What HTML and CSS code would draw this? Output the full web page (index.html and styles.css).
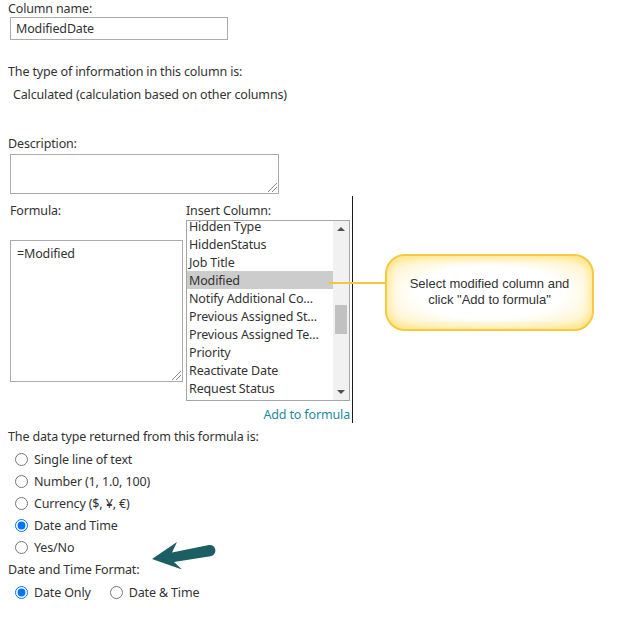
FILE: index.html
```html
<!DOCTYPE html>
<html>
<head>
<meta charset="utf-8">
<link rel="stylesheet" href="styles.css">
</head>
<body>
<div class="page">
  <div class="lbl">Column name:</div>
  <div class="textbox name-box">ModifiedDate</div>

  <div class="lbl type-lbl">The type of information in this column is:</div>
  <div class="lbl type-val">Calculated (calculation based on other columns)</div>

  <div class="lbl desc-lbl">Description:</div>
  <div class="textarea desc-box"><span class="grip"></span></div>

  <div class="formula-row">
    <div class="formula-col">
      <div class="lbl">Formula:</div>
      <div class="textarea formula-box">=Modified<span class="grip"></span></div>
    </div>
    <div class="insert-col">
      <div class="lbl">Insert Column:</div>
      <div class="listbox">
        <div class="items">
          <div class="item">Hidden Type</div>
          <div class="item">HiddenStatus</div>
          <div class="item">Job Title</div>
          <div class="item selected">Modified</div>
          <div class="item">Notify Additional Co...</div>
          <div class="item">Previous Assigned St...</div>
          <div class="item">Previous Assigned Te...</div>
          <div class="item">Priority</div>
          <div class="item">Reactivate Date</div>
          <div class="item">Request Status</div>
        </div>
        <div class="scrollbar">
          <span class="arrow up"></span>
          <span class="thumb"></span>
          <span class="arrow down"></span>
        </div>
      </div>
      <div class="add-link">Add to formula</div>
    </div>
  </div>

  <div class="lbl ret-lbl">The data type returned from this formula is:</div>
  <div class="radios">
    <label class="radio-row"><input type="radio" name="rt"><span>Single line of text</span></label>
    <label class="radio-row"><input type="radio" name="rt"><span>Number (1, 1.0, 100)</span></label>
    <label class="radio-row"><input type="radio" name="rt"><span>Currency ($, ¥, €)</span></label>
    <label class="radio-row"><input type="radio" name="rt" checked><span>Date and Time</span></label>
    <label class="radio-row"><input type="radio" name="rt"><span>Yes/No</span></label>
  </div>

  <div class="lbl fmt-lbl">Date and Time Format:</div>
  <div class="fmt-row">
    <label class="radio-row"><input type="radio" name="fmt" checked><span>Date Only</span></label>
    <label class="radio-row second"><input type="radio" name="fmt"><span>Date &amp; Time</span></label>
  </div>

  <div class="callout-line"></div>
  <div class="callout">Select modified column and<br>click "Add to formula"</div>

  <svg class="pointer" width="80" height="45" viewBox="0 0 80 45">
    <path d="M12 29 L37 12 L32 22.5 L69 15 A5.6 5.6 0 0 1 70.5 26.2 L34 32 L42 39.5 Z" fill="#1b5e63"/>
  </svg>
</div>
</body>
</html>
```

FILE: styles.css
```css
html, body {
  margin: 0;
  padding: 0;
  background: #ffffff;
}

.page {
  position: relative;
  width: 636px;
  height: 620px;
  padding: 1px 0 0 8px;
  box-sizing: border-box;
  font-family: "Noto Sans", "Open Sans", sans-serif;
  font-size: 12.5px;
  letter-spacing: -0.15px;
  color: #333333;
}

.lbl {
  line-height: 16px;
  white-space: nowrap;
}

.textbox {
  margin: 0 0 0 2px;
  width: 218px;
  height: 23px;
  box-sizing: border-box;
  border: 1px solid #ababab;
  padding: 1px 0 0 5px;
  line-height: 20px;
}

.type-lbl { margin-top: 24px; }
.type-val { margin-top: 7px; padding-left: 5px; }
.desc-lbl { margin-top: 33px; }

.textarea {
  position: relative;
  box-sizing: border-box;
  border: 1px solid #ababab;
  background: #fff;
}

.desc-box {
  margin: 2px 0 0 2px;
  width: 269px;
  height: 40px;
}

.grip {
  position: absolute;
  right: 1px;
  bottom: 1px;
  width: 9px;
  height: 9px;
  background:
    linear-gradient(135deg, transparent 0 46%, #8a8a8a 46% 54%, transparent 54% 100%) 0 0 / 9px 9px no-repeat,
    linear-gradient(135deg, transparent 0 46%, #8a8a8a 46% 54%, transparent 54% 100%) 4px 4px / 5px 5px no-repeat;
}

.formula-row {
  display: flex;
  gap: 3px;
  margin-top: 2px;
}

.formula-col {
  margin-left: 2px;
  width: 173px;
  padding-top: 7px;
}

.formula-box {
  margin-top: 21px;
  height: 142px;
  padding: 5px 0 0 6px;
  line-height: 16px;
}

.insert-col {
  width: 164px;
  padding: 7px 2px 0 0;
  border-right: 1px solid #1a1a1a;
}

.listbox {
  margin-top: 1px;
  height: 181px;
  box-sizing: border-box;
  border: 1px solid #a6a6a6;
  display: flex;
  overflow: hidden;
  background: #fff;
}

.items {
  flex: 1;
  margin-top: -4px;
}

.item {
  height: 18px;
  box-sizing: border-box;
  padding: 1px 0 0 2px;
  line-height: 17px;
  white-space: nowrap;
  overflow: hidden;
}

.item.selected {
  background: #cccccc;
}

.scrollbar {
  width: 16px;
  background: #f1f1f1;
  display: flex;
  flex-direction: column;
  align-items: center;
  position: relative;
}

.arrow {
  width: 0;
  height: 0;
  border-left: 4px solid transparent;
  border-right: 4px solid transparent;
}

.arrow.up {
  border-bottom: 4px solid #505050;
  margin-top: 6px;
}

.arrow.down {
  border-top: 4px solid #505050;
  margin-top: auto;
  margin-bottom: 6px;
}

.thumb {
  position: absolute;
  left: 2px;
  top: 84px;
  width: 12px;
  height: 29px;
  background: #c1c1c1;
}

.add-link {
  margin-top: 6px;
  text-align: right;
  line-height: 16px;
  color: #1d8aa0;
}

.ret-lbl { margin-top: 6px; }

.radios {
  margin-top: 3px;
}

.radio-row {
  display: flex;
  align-items: center;
  height: 22px;
  white-space: nowrap;
}

.radio-row input {
  margin: 0 6px 0 7px;
  width: 13px;
  height: 13px;
  accent-color: #0075ff;
}

.fmt-lbl { margin-top: 4px; }

.fmt-row {
  margin-top: 3px;
  display: flex;
}

.fmt-row .second input {
  margin-left: 19px;
}

.callout-line {
  position: absolute;
  left: 328px;
  top: 282px;
  width: 58px;
  height: 2px;
  background: #f5c540;
}

.callout {
  position: absolute;
  left: 385px;
  top: 254px;
  width: 209px;
  height: 77px;
  box-sizing: border-box;
  border: 2px solid #f8c840;
  border-radius: 20px;
  background: radial-gradient(ellipse at center, #ffffff 50%, #fff6d6 78%, #ffe58c 100%);
  box-shadow: inset 0 0 8px 2px #ffe586;
  font-family: "Liberation Sans", Arial, sans-serif;
  font-size: 13px;
  line-height: 16px;
  letter-spacing: 0;
  color: #333;
  text-align: center;
  padding-top: 20px;
}

.pointer {
  position: absolute;
  left: 140px;
  top: 530px;
}
```
